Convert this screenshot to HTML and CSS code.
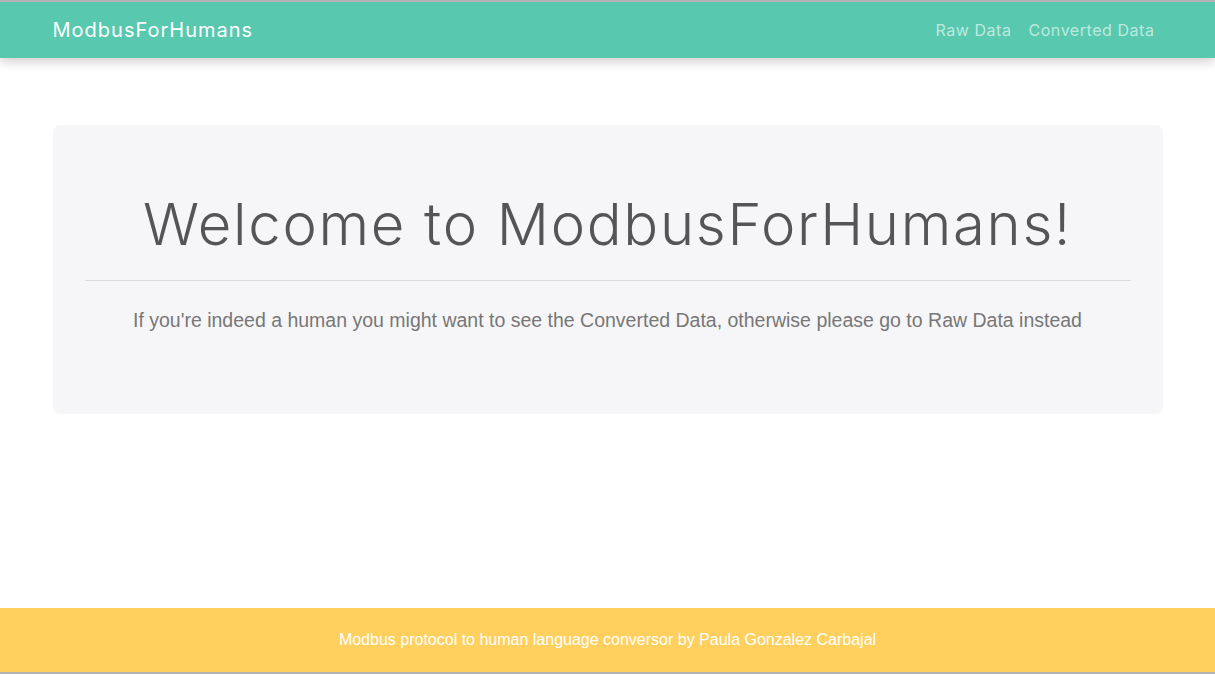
FILE: index.html
```html
<!DOCTYPE html>
<html lang="en">
<head>
<meta charset="utf-8">
<title>ModbusForHumans</title>
<link rel="stylesheet" href="styles.css">
</head>
<body>
<div class="page">
  <nav class="navbar">
    <div class="container nav-inner">
      <a class="brand" href="#">ModbusForHumans</a>
      <div class="nav-links">
        <a href="#">Raw Data</a>
        <a href="#">Converted Data</a>
      </div>
    </div>
  </nav>
  <main class="main">
    <div class="container">
      <section class="jumbotron">
        <h1 class="display">Welcome to ModbusForHumans!</h1>
        <hr class="divider">
        <p class="lead">If you're indeed a human you might want to see the Converted Data, otherwise please go to Raw Data instead</p>
      </section>
    </div>
  </main>
  <footer class="footer">
    <p>Modbus protocol to human language conversor by Paula Gonzalez Carbajal</p>
  </footer>
</div>
</body>
</html>
```
FILE: styles.css
```css
html, body {
  margin: 0;
  padding: 0;
  height: 100%;
}
body {
  background: #ffffff;
  font-family: "Liberation Sans", Arial, sans-serif;
  border-top: 2px solid #b3b3b3;
  border-bottom: 2px solid #b3b3b3;
  box-sizing: border-box;
}
.page {
  display: flex;
  flex-direction: column;
  height: 100%;
}
.container {
  width: 1110px;
  margin: 0 auto;
}
.navbar {
  background: #58c8af;
  height: 56px;
  box-shadow: 0 4px 10px rgba(0, 0, 0, 0.18);
  position: relative;
  z-index: 1;
}
.nav-inner {
  display: flex;
  align-items: center;
  justify-content: space-between;
  height: 100%;
}
.brand {
  font-family: Inter, "DejaVu Sans", sans-serif;
  color: #ffffff;
  font-size: 20px;
  text-decoration: none;
  letter-spacing: 1px;
}
.nav-links {
  display: flex;
  gap: 17px;
  padding-right: 8px;
}
.nav-links a {
  font-family: Inter, "DejaVu Sans", sans-serif;
  color: rgba(255, 255, 255, 0.62);
  font-size: 16px;
  letter-spacing: 0.55px;
  text-decoration: none;
}
.main {
  flex: 1;
  padding-top: 67px;
}
.jumbotron {
  background: #f6f6f8;
  border-radius: 7px;
  padding: 65px 32px 70px;
  height: 289px;
  box-sizing: border-box;
  text-align: center;
}
.display {
  font-family: Inter, "DejaVu Sans", sans-serif;
  font-weight: 300;
  font-size: 58px;
  letter-spacing: 1.7px;
  color: #555555;
  margin: 0;
  line-height: 1.2;
}
.divider {
  border: 0;
  border-top: 1px solid #dcdcdc;
  margin: 20px 0 28px;
}
.lead {
  margin: 0;
  font-size: 19.5px;
  color: #777777;
}
.footer {
  background: #ffd05e;
  height: 64px;
  display: flex;
  align-items: center;
  justify-content: center;
}
.footer p {
  margin: 0;
  color: #ffffff;
  font-size: 16px;
}
```
